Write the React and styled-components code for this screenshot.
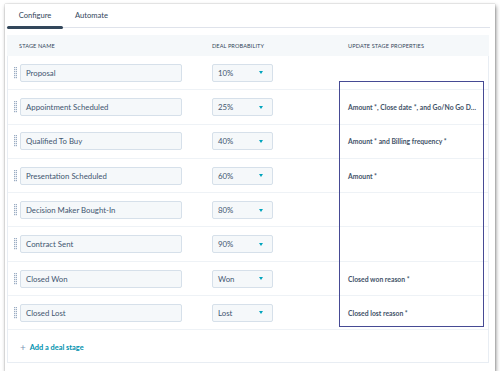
import React from "react";
import styled, { createGlobalStyle } from "styled-components";

const Global = createGlobalStyle`
  html, body { margin: 0; padding: 0; background: #fff; }
  body { font-family: Lato, "Open Sans", "Liberation Sans", sans-serif; color: #33475b; }
  * { box-sizing: border-box; }
`;

const Card = styled.div`
  margin: 4px 0 0 5px;
  width: 490px;
  height: 367px;
  background: #fff;
  box-shadow: 1px 2px 4px rgba(0, 0, 0, 0.45), 0 0 1px rgba(0, 0, 0, 0.35);
  padding: 0 6px 0 2px;
  display: flex;
  flex-direction: column;
`;

const TabBar = styled.div`
  height: 24px;
  display: flex;
  align-items: stretch;
  border-bottom: 1px solid #dfe3eb;
  margin-right: -1px;
`;

const Tab = styled.div`
  width: ${(p) => p.$w}px;
  display: flex;
  align-items: center;
  justify-content: center;
  font-size: 7.6px;
  color: #33475b;
  position: relative;
  padding-bottom: 1px;
  ${(p) =>
    p.$active &&
    `&::after{content:"";position:absolute;left:0;right:0;bottom:-2px;height:3px;border-radius:2px;background:#33475b;}`}
`;

const Panel = styled.div`
  margin-top: 7px;
  border: 1px solid #e8edf3;
  border-top: none;
  position: relative;
  height: 328px;
`;

const Grid = styled.div`
  display: grid;
  grid-template-columns: 12px 192px 136px 1fr;
  align-items: center;
`;

const HeadRow = styled(Grid)`
  height: 21px;
  background: #f5f8fa;
  margin-left: -1px;
  margin-right: -1px;
  padding-left: 1px;
`;

const HeadCell = styled.div`
  grid-column: ${(p) => p.$col};
  font-size: 5.6px;
  letter-spacing: 0.1px;
  text-transform: uppercase;
  color: #33475b;
  margin-left: ${(p) => p.$ml || 0}px;
`;

const Row = styled(Grid)`
  height: 34.3px;
  border-bottom: 1px solid #eef2f6;
  padding-top: 0.5px;
`;

const Handle = styled.svg`
  justify-self: center;
  margin-left: 3px;
`;

const Field = styled.div`
  width: 162px;
  height: 18px;
  background: #f5f8fa;
  border: 1px solid #d6e0ea;
  border-radius: 2px;
  display: flex;
  align-items: center;
  padding-left: 5px;
  font-size: 7.8px;
  color: #3f5670;
`;

const Select = styled(Field)`
  width: 61px;
  justify-content: space-between;
  padding-right: 9px;
`;

const Caret = styled.span`
  width: 0;
  height: 0;
  border-left: 2.5px solid transparent;
  border-right: 2.5px solid transparent;
  border-top: 3px solid #00a4bd;
`;

const Props = styled.div`
  font-size: 6.8px;
  font-weight: 700;
  color: #3f5268;
  white-space: nowrap;
`;

const AddRow = styled.div`
  height: 32px;
  display: flex;
  align-items: center;
  padding: 3px 0 0 12px;
  gap: 4px;
  font-size: 7.4px;
  font-weight: 700;
  color: #0091ae;
`;

const Plus = styled.span`
  font-weight: 400;
  font-size: 10px;
  color: #7c98b6;
  line-height: 1;
  margin-top: -1px;
`;

const Highlight = styled.div`
  position: absolute;
  left: 331px;
  top: 46px;
  width: 145px;
  height: 246px;
  border: 1.6px solid #464a94;
  pointer-events: none;
`;

const stages = [
  ["Proposal", "10%", ""],
  ["Appointment Scheduled", "25%", "Amount *, Close date *, and Go/No Go D…"],
  ["Qualified To Buy", "40%", "Amount * and Billing frequency *"],
  ["Presentation Scheduled", "60%", "Amount *"],
  ["Decision Maker Bought-In", "80%", ""],
  ["Contract Sent", "90%", ""],
  ["Closed Won", "Won", "Closed won reason *"],
  ["Closed Lost", "Lost", "Closed lost reason *"],
];

const DragHandle = () => (
  <Handle width="3" height="12" viewBox="0 0 3 12">
    {Array.from({ length: 6 }).map((_, i) => (
      <g key={i} fill="#99acc2">
        <rect x="0" y={i * 2} width="1.2" height="1.2" />
        <rect x="1.8" y={i * 2} width="1.2" height="1.2" />
      </g>
    ))}
  </Handle>
);

export default function App() {
  return (
    <>
      <Global />
      <Card>
        <TabBar>
          <Tab $w={56} $active>Configure</Tab>
          <Tab $w={57}>Automate</Tab>
        </TabBar>
        <Panel>
          <HeadRow>
            <HeadCell $col={2} $ml={-1}>Stage name</HeadCell>
            <HeadCell $col={3}>Deal probability</HeadCell>
            <HeadCell $col={4}>Update stage properties</HeadCell>
          </HeadRow>
          {stages.map(([name, prob, props]) => (
            <Row key={name}>
              <DragHandle />
              <Field>{name}</Field>
              <Select>
                <span>{prob}</span>
                <Caret />
              </Select>
              <Props>{props}</Props>
            </Row>
          ))}
          <AddRow>
            <Plus>+</Plus>
            Add a deal stage
          </AddRow>
          <Highlight />
        </Panel>
      </Card>
    </>
  );
}
